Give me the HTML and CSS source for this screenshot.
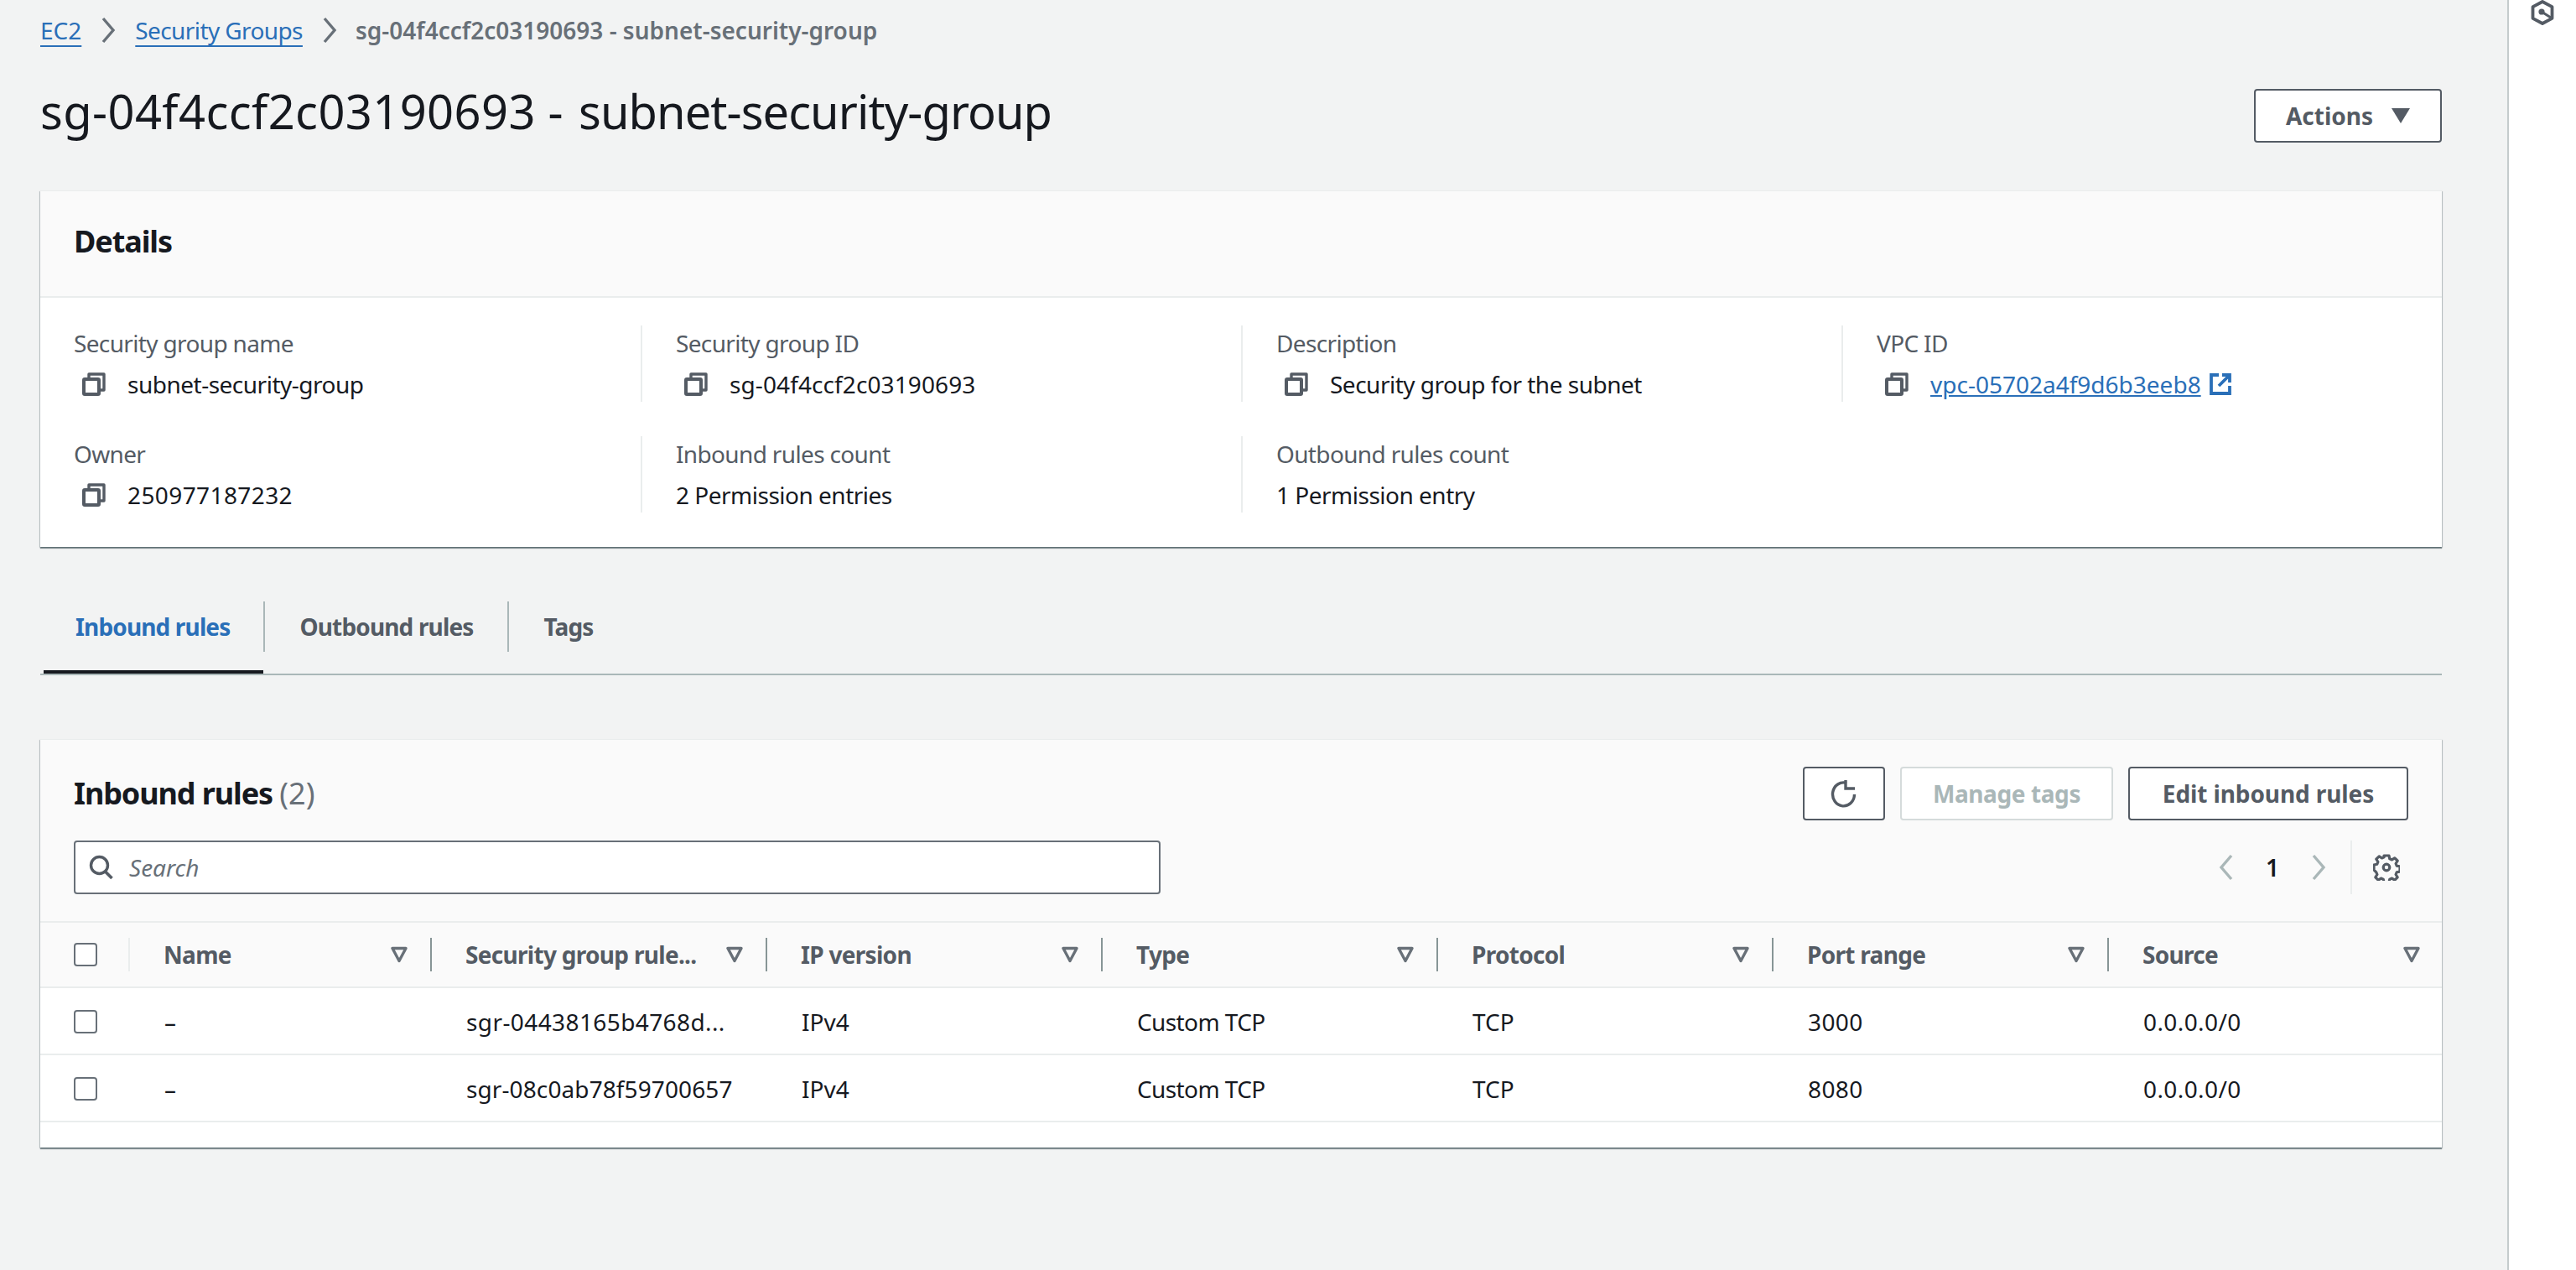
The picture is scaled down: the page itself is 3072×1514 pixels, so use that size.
FILE: index.html
```html
<!DOCTYPE html>
<html lang="en">
<head>
    <meta charset="UTF-8">
    <title>sg-04f4ccf2c03190693 - subnet-security-group</title>
    <link rel="stylesheet" href="styles.css">
</head>
<body>
    <svg class="icon-defs" width="0" height="0">
        <symbol id="copy" viewBox="0 0 28 28">
            <path d="M8 6V2h18v19h-4" fill="none" stroke="currentColor" stroke-width="3.4" stroke-linejoin="round"/>
            <rect x="2" y="8" width="18" height="18" rx="1" fill="none" stroke="currentColor" stroke-width="4"/>
        </symbol>
        <symbol id="filter" viewBox="0 0 20 20">
            <path d="M2 2.500h16l-8 15z" fill="none" stroke="currentColor" stroke-width="3.400" stroke-linejoin="round"/>
        </symbol>
    </svg>

    <main class="main-content">
        <nav class="breadcrumb">
            <a href="#">EC2</a>
            <svg class="crumb-sep" viewBox="0 0 18 32"><path d="M3 2l12 14L3 30" fill="none" stroke="currentColor" stroke-width="3.400"/></svg>
            <a href="#" class="crumb-text">Security Groups</a>
            <svg class="crumb-sep" viewBox="0 0 18 32"><path d="M3 2l12 14L3 30" fill="none" stroke="currentColor" stroke-width="3.400"/></svg>
            <span class="crumb-current">sg-04f4ccf2c03190693 - subnet-security-group</span>
        </nav>

        <header class="page-header">
            <h1><span class="title-id">sg-04f4ccf2c03190693</span> - <span class="title-name">subnet-security-group</span></h1>
            <button class="btn btn-actions">Actions
                <svg class="caret" viewBox="0 0 22 20"><path d="M0 1h22L11 19z" fill="currentColor"/></svg>
            </button>
        </header>

        <section class="card details-card">
            <div class="card-head"><h2>Details</h2></div>
            <div class="details-grid">
                <div class="detail-item">
                    <div class="detail-label">Security group name</div>
                    <div class="detail-value"><svg class="copy-icon"><use href="#copy"/></svg>subnet-security-group</div>
                </div>
                <div class="detail-item">
                    <div class="detail-label">Security group ID</div>
                    <div class="detail-value"><svg class="copy-icon"><use href="#copy"/></svg><span class="id-text">sg-04f4ccf2c03190693</span></div>
                </div>
                <div class="detail-item">
                    <div class="detail-label">Description</div>
                    <div class="detail-value"><svg class="copy-icon"><use href="#copy"/></svg>Security group for the subnet</div>
                </div>
                <div class="detail-item">
                    <div class="detail-label">VPC ID</div>
                    <div class="detail-value"><svg class="copy-icon"><use href="#copy"/></svg><a href="#" class="ext-link">vpc-05702a4f9d6b3eeb8 <svg class="ext-icon" viewBox="0 0 28 28"><path d="M12 3H3v22h22v-9M16 3h9v9M25 3L12 16" fill="none" stroke="currentColor" stroke-width="3.800"/></svg></a></div>
                </div>
                <div class="detail-item">
                    <div class="detail-label">Owner</div>
                    <div class="detail-value"><svg class="copy-icon"><use href="#copy"/></svg><span class="num-text">250977187232</span></div>
                </div>
                <div class="detail-item">
                    <div class="detail-label">Inbound rules count</div>
                    <div class="detail-value">2 Permission entries</div>
                </div>
                <div class="detail-item">
                    <div class="detail-label">Outbound rules count</div>
                    <div class="detail-value">1 Permission entry</div>
                </div>
            </div>
        </section>

        <div class="tabs">
            <a href="#" class="tab active">Inbound rules</a>
            <a href="#" class="tab">Outbound rules</a>
            <a href="#" class="tab">Tags</a>
        </div>

        <section class="card rules-card">
            <div class="rules-head">
                <div class="rules-top">
                    <h2>Inbound rules <span class="count">(2)</span></h2>
                    <div class="rules-actions">
                        <button class="btn btn-icon" aria-label="Refresh">
                            <svg viewBox="0 0 34 34" width="34" height="34"><path d="M29.500 18A13 14 0 1 1 20 4.400" fill="none" stroke="currentColor" stroke-width="3.400"/><path d="M19 1v10h11" fill="none" stroke="currentColor" stroke-width="3.400"/></svg>
                        </button>
                        <button class="btn btn-disabled">Manage tags</button>
                        <button class="btn btn-edit">Edit inbound rules</button>
                    </div>
                </div>
                <div class="rules-bottom">
                    <div class="search-box">
                        <svg class="search-icon" viewBox="0 0 30 30"><circle cx="12.500" cy="12.500" r="10" fill="none" stroke="currentColor" stroke-width="3.400"/><path d="M19.500 20l8 8" fill="none" stroke="currentColor" stroke-width="3.800"/></svg>
                        <input type="text" placeholder="Search">
                    </div>
                    <div class="pager">
                        <svg class="pager-arrow" viewBox="0 0 18 32"><path d="M15 2L3 16l12 14" fill="none" stroke="currentColor" stroke-width="3.400"/></svg>
                        <span class="pager-num">1</span>
                        <svg class="pager-arrow" viewBox="0 0 18 32"><path d="M3 2l12 14L3 30" fill="none" stroke="currentColor" stroke-width="3.400"/></svg>
                        <span class="pager-sep"></span>
                        <svg class="gear" viewBox="0 0 32 32"><path d="M13 2h6l.8 3.800 2.700 1.100 3.300-2.100 1.700 1.700 1.700 1.700-2.100 3.300 1.100 2.700 3.800.8v6l-3.800.8-1.100 2.700 2.100 3.300-3.400 3.400-3.300-2.100-2.700 1.100-.8 3.800h-6l-.8-3.800-2.700-1.100-3.300 2.100-3.400-3.400 2.100-3.300-1.100-2.700L1 19v-6l3.800-.8 1.100-2.700-2.100-3.300 3.400-3.400 3.300 2.100 2.700-1.100z" fill="none" stroke="currentColor" stroke-width="3.200" stroke-linejoin="round"/><circle cx="16" cy="16" r="3.800" fill="none" stroke="currentColor" stroke-width="3.200"/></svg>
                    </div>
                </div>
            </div>

            <table class="rules-table">
                <colgroup>
                    <col class="col-check"><col class="col-name"><col class="col-std"><col class="col-std"><col class="col-std"><col class="col-std"><col class="col-std"><col>
                </colgroup>
                <thead>
                    <tr>
                        <th class="check-cell"><div class="th-inner th-check"><span class="checkbox"></span></div></th>
                        <th><div class="th-inner">Name<svg class="filter-icon"><use href="#filter"/></svg></div></th>
                        <th><div class="th-inner">Security group rule...<svg class="filter-icon"><use href="#filter"/></svg></div></th>
                        <th><div class="th-inner">IP version<svg class="filter-icon"><use href="#filter"/></svg></div></th>
                        <th><div class="th-inner">Type<svg class="filter-icon"><use href="#filter"/></svg></div></th>
                        <th><div class="th-inner">Protocol<svg class="filter-icon"><use href="#filter"/></svg></div></th>
                        <th><div class="th-inner">Port range<svg class="filter-icon"><use href="#filter"/></svg></div></th>
                        <th class="last-col"><div class="th-inner">Source<svg class="filter-icon"><use href="#filter"/></svg></div></th>
                    </tr>
                </thead>
                <tbody>
                    <tr>
                        <td class="check-cell"><span class="checkbox"></span></td>
                        <td>–</td>
                        <td class="num-text">sgr-04438165b4768d...</td>
                        <td>IPv4</td>
                        <td class="word-text">Custom TCP</td>
                        <td>TCP</td>
                        <td class="num-text">3000</td>
                        <td class="num-text">0.0.0.0/0</td>
                    </tr>
                    <tr>
                        <td class="check-cell"><span class="checkbox"></span></td>
                        <td>–</td>
                        <td class="id-text">sgr-08c0ab78f59700657</td>
                        <td>IPv4</td>
                        <td class="word-text">Custom TCP</td>
                        <td>TCP</td>
                        <td class="num-text">8080</td>
                        <td class="num-text">0.0.0.0/0</td>
                    </tr>
                </tbody>
            </table>
        </section>
    </main>

    <aside class="side-rail">
        <svg class="rail-logo" viewBox="0 0 28 30"><path d="M14 2l11.500 6.200v13.600L14 28 2.500 21.800V8.200z" fill="none" stroke="currentColor" stroke-width="3.800" stroke-linejoin="round"/><circle cx="13" cy="14" r="3.600" fill="currentColor"/><path d="M13 14l11 7" stroke="currentColor" stroke-width="3"/></svg>
    </aside>
</body>
</html>
```

FILE: styles.css
```css
html, body {
    margin: 0;
    padding: 0;
    height: 100%;
    overflow: hidden;
}
body {
    display: flex;
    font-family: 'Noto Sans', 'Open Sans', sans-serif;
    font-size: 28px;
    color: #16191f;
    background: #fff;
}
a {
    color: #2a6fb8;
}
h1, h2 {
    margin: 0;
}
.icon-defs {
    position: absolute;
}

.main-content {
    box-sizing: border-box;
    width: 2992px;
    height: 1514px;
    padding: 0 78px 0 48px;
    background: #f2f3f3;
    border-right: 2px solid #c5cbcc;
    flex-shrink: 0;
}
.side-rail {
    flex: 1;
    display: flex;
    justify-content: center;
    color: #545b64;
}
.rail-logo {
    width: 28px;
    height: 30px;
}

/* breadcrumb */
.breadcrumb {
    display: flex;
    align-items: center;
    height: 72px;
    line-height: 36px;
}
.breadcrumb a {
    text-underline-offset: 7px;
    text-decoration-thickness: 2px;
}
.crumb-text {
    letter-spacing: -0.6px;
}
.crumb-sep {
    width: 18px;
    height: 32px;
    margin: 0 23px;
    color: #687078;
}
.crumb-current {
    color: #687078;
    font-weight: 600;
    margin-left: -1px;
}

/* title */
.page-header {
    display: flex;
    justify-content: space-between;
    align-items: center;
    height: 64px;
    margin: 34px 0 57px;
}
.page-header h1 {
    font-size: 56px;
    font-weight: 400;
    line-height: 64px;
    margin-top: -12px;
}
.title-id {
    letter-spacing: 0.4px;
}
.title-name {
    letter-spacing: -0.95px;
    margin-left: 4px;
}

/* buttons */
.btn {
    box-sizing: border-box;
    height: 64px;
    display: inline-flex;
    align-items: center;
    justify-content: center;
    background: #fff;
    color: #545b64;
    border: 2px solid #545b64;
    border-radius: 4px;
    font-family: inherit;
    font-size: 28px;
    font-weight: 700;
    padding: 0;
}
.btn-actions {
    width: 224px;
    gap: 22px;
}
.caret {
    width: 22px;
    height: 20px;
}
.btn-icon {
    width: 98px;
}
.btn-disabled {
    width: 254px;
    color: #aab7b8;
    border-color: #d5dbdb;
    letter-spacing: -0.4px;
}
.btn-edit {
    width: 334px;
    letter-spacing: -0.1px;
}

/* cards */
.card {
    background: #fff;
    border-top: 1px solid #eaeded;
    box-shadow: 0 2px 1px 0 rgba(0, 28, 36, 0.4), 1px 1px 1px 0 rgba(0, 28, 36, 0.18), -1px 1px 1px 0 rgba(0, 28, 36, 0.18);
}
.card h2 {
    font-size: 36px;
    font-weight: 700;
    line-height: 44px;
    letter-spacing: -1.1px;
}
.card-head {
    box-sizing: border-box;
    height: 127px;
    padding: 38px 40px 0;
    background: #fafafa;
    border-bottom: 2px solid #eaeded;
}

/* details */
.details-grid {
    display: grid;
    grid-template-columns: 676px 716px 716px 1fr;
    row-gap: 41px;
    padding: 33px 0 41px 40px;
}
.detail-item {
    box-sizing: border-box;
    height: 91px;
    padding-left: 40px;
    border-left: 2px solid #eaeded;
}
.detail-item:nth-child(4n+1) {
    padding-left: 0;
    border-left: none;
}
.detail-label {
    color: #545b64;
    line-height: 40px;
    margin-top: 1px;
    letter-spacing: -0.65px;
}
.detail-value {
    display: flex;
    align-items: center;
    line-height: 40px;
    margin-top: 9px;
    letter-spacing: -0.5px;
}
.copy-icon {
    width: 28px;
    height: 28px;
    margin: 0 26px 0 10px;
    color: #545b64;
    flex-shrink: 0;
}
.id-text {
    letter-spacing: 0.1px;
}
.num-text {
    letter-spacing: 0.4px;
}
.word-text {
    letter-spacing: -0.6px;
}
.ext-link {
    display: inline-flex;
    align-items: center;
    gap: 9px;
    letter-spacing: 0;
}
.ext-icon {
    width: 28px;
    height: 28px;
}

/* tabs */
.tabs {
    display: flex;
    align-items: flex-start;
    box-sizing: border-box;
    height: 88px;
    margin-top: 65px;
    border-bottom: 2px solid #aab7b8;
}
.tab {
    position: relative;
    height: 60px;
    line-height: 60px;
    padding: 0 41px;
    border-left: 2px solid #aab7b8;
    color: #545b64;
    font-weight: 700;
    text-decoration: none;
    letter-spacing: -0.85px;
}
.tab.active {
    margin-left: 4px;
    padding: 0 40px 0 38px;
    border-left: none;
    color: #2a6fb8;
}
.tab.active::after {
    content: '';
    position: absolute;
    left: 0;
    right: 0;
    bottom: -26px;
    height: 4px;
    background: #16191f;
}

/* rules */
.rules-card {
    margin-top: 76px;
    padding-bottom: 30px;
}
.rules-head {
    box-sizing: border-box;
    height: 216px;
    padding: 32px 40px 0;
    background: #fafafa;
}
.rules-top,
.rules-bottom {
    display: flex;
    justify-content: space-between;
    align-items: center;
}
.rules-top {
    height: 64px;
}
.rules-bottom {
    height: 64px;
    margin-top: 24px;
}
.count {
    color: #687078;
    font-weight: 400;
    letter-spacing: 0;
}
.rules-actions {
    display: flex;
    gap: 18px;
}
.search-box {
    box-sizing: border-box;
    display: flex;
    align-items: center;
    width: 1296px;
    height: 64px;
    padding-left: 16px;
    background: #fff;
    border: 2px solid #687078;
    border-radius: 4px;
}
.search-icon {
    width: 30px;
    height: 30px;
    color: #545b64;
    flex-shrink: 0;
}
.search-box input {
    flex: 1;
    border: none;
    outline: none;
    background: transparent;
    margin-left: 18px;
    padding: 0;
    font-family: inherit;
    font-size: 28px;
    font-style: italic;
}
.search-box input::placeholder {
    color: #687078;
    opacity: 1;
}
.pager {
    display: flex;
    align-items: center;
    height: 64px;
    margin-right: 10px;
}
.pager-arrow {
    width: 18px;
    height: 32px;
    color: #aab7b8;
}
.pager-num {
    width: 92px;
    text-align: center;
    font-weight: 600;
}
.pager-sep {
    width: 2px;
    height: 64px;
    margin: 0 25px 0 29px;
    background: #eaeded;
}
.gear {
    width: 32px;
    height: 32px;
    color: #545b64;
}

/* table */
.rules-table {
    width: 100%;
    table-layout: fixed;
    border-collapse: collapse;
}
.col-check {
    width: 107px;
}
.col-name {
    width: 360px;
}
.col-std {
    width: 400px;
}
.rules-table th {
    box-sizing: border-box;
    height: 78px;
    padding: 0;
    background: #fafafa;
    border-top: 2px solid #eaeded;
    border-bottom: 2px solid #eaeded;
    color: #545b64;
    font-weight: 700;
    text-align: left;
    letter-spacing: -0.7px;
}
.th-inner {
    box-sizing: border-box;
    display: flex;
    align-items: center;
    justify-content: space-between;
    height: 40px;
    padding: 0 27px 0 40px;
    border-right: 2px solid #879596;
    white-space: nowrap;
}
.th-check {
    padding-right: 0;
    border-right-color: #eaeded;
}
.last-col .th-inner {
    border-right: none;
    padding-right: 26px;
}
.filter-icon {
    width: 20px;
    height: 20px;
    color: #687078;
    flex-shrink: 0;
}
.rules-table td {
    box-sizing: border-box;
    height: 80px;
    padding: 1px 0 0 41px;
    border-bottom: 2px solid #eaeded;
    white-space: nowrap;
}
.rules-table td.check-cell {
    padding-left: 40px;
}
.checkbox {
    box-sizing: border-box;
    display: block;
    width: 28px;
    height: 28px;
    background: #fff;
    border: 2px solid #687078;
    border-radius: 4px;
}
```
